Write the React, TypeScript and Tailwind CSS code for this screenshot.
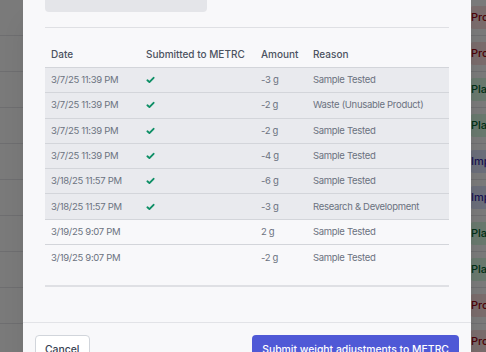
type Adjustment = {
  date: string;
  submitted: boolean;
  amount: string;
  reason: string;
};

const ADJUSTMENTS: Adjustment[] = [
  { date: "3/7/25 11:39 PM", submitted: true, amount: "-3 g", reason: "Sample Tested" },
  { date: "3/7/25 11:39 PM", submitted: true, amount: "-2 g", reason: "Waste (Unusable Product)" },
  { date: "3/7/25 11:39 PM", submitted: true, amount: "-2 g", reason: "Sample Tested" },
  { date: "3/7/25 11:39 PM", submitted: true, amount: "-4 g", reason: "Sample Tested" },
  { date: "3/18/25 11:57 PM", submitted: true, amount: "-6 g", reason: "Sample Tested" },
  { date: "3/18/25 11:57 PM", submitted: true, amount: "-3 g", reason: "Research & Development" },
  { date: "3/19/25 9:07 PM", submitted: false, amount: "2 g", reason: "Sample Tested" },
  { date: "3/19/25 9:07 PM", submitted: false, amount: "-2 g", reason: "Sample Tested" },
];

// status badges of the list behind the dialog, only their first letters show
const BADGES: { label: string; tone: string }[] = [
  { label: "Pro", tone: "bg-red-100 text-red-800" },
  { label: "Pro", tone: "bg-red-100 text-red-800" },
  { label: "Plac", tone: "bg-green-100 text-green-800" },
  { label: "Plac", tone: "bg-green-100 text-green-800" },
  { label: "Imp", tone: "bg-indigo-100 text-indigo-800" },
  { label: "Imp", tone: "bg-indigo-100 text-indigo-800" },
  { label: "Plac", tone: "bg-green-100 text-green-800" },
  { label: "Plac", tone: "bg-green-100 text-green-800" },
  { label: "Pro", tone: "bg-red-100 text-red-800" },
  { label: "Pro", tone: "bg-red-100 text-red-800" },
];

function Check() {
  return (
    <svg width="9" height="8" viewBox="0 0 9 8" fill="none">
      <path
        d="M1.4 4.3 L3.4 6.1 L7.6 1.8"
        stroke="#0f8f66"
        strokeWidth="1.9"
        strokeLinecap="round"
        strokeLinejoin="round"
      />
    </svg>
  );
}

export default function App() {
  return (
    <div className="relative h-[352px] w-[486px] overflow-hidden bg-white font-['Inter',sans-serif]">
      {/* page behind the dialog */}
      <div className="flex flex-col">
        {BADGES.map((b, i) => (
          <div key={i} className="flex h-9 items-center border-b border-gray-200 pl-[470px]">
            <span className={`whitespace-nowrap rounded-l px-[1px] py-[3px] text-[11px] font-medium ${b.tone}`}>
              {b.label}
            </span>
          </div>
        ))}
      </div>
      <div className="absolute inset-0 bg-black/[0.52]" />

      {/* dialog */}
      <div className="absolute left-[23px] top-0 flex h-[390px] w-[448px] flex-col bg-[#f8f8fa] shadow-xl">
        <div className="px-[22px]">
          <div className="h-3 w-[162px] rounded-b-sm bg-[#e4e5e9]" />
          <div className="mt-[15px] border-t border-[#dfe0e4] pt-[13px]">
            <div className="grid h-[27px] grid-cols-[95px_115px_52px_1fr] items-center border-b border-[#d3d5da] text-[10px] font-medium text-[#4b5260]">
              <div className="px-[6px]">Date</div>
              <div className="px-[6px]">Submitted to METRC</div>
              <div className="px-[6px]">Amount</div>
              <div className="px-[6px]">Reason</div>
            </div>
            {ADJUSTMENTS.map((a, i) => (
              <div
                key={i}
                className={`grid h-[25.3px] grid-cols-[95px_115px_52px_1fr] items-center text-[9.5px] tracking-[-0.3px] text-[#6b7280] ${
                  a.submitted ? "bg-[#e9eaee]" : ""
                } ${i < ADJUSTMENTS.length - 1 ? "border-b border-[#d3d5da]" : ""}`}
              >
                <div className="px-[6px]">{a.date}</div>
                <div className="px-[6px]">{a.submitted && <Check />}</div>
                <div className="px-[6px]">{a.amount}</div>
                <div className="px-[6px]">{a.reason}</div>
              </div>
            ))}
            <div className="h-[17px] border-b-2 border-[#dfe0e4]" />
          </div>
        </div>
        <div className="mt-[35px] flex justify-between border-t border-[#e2e3e7] px-3 pt-[12px]">
          <button className="h-[28px] rounded border border-[#d1d5db] bg-white px-[9px] text-[10.4px] font-medium text-[#374151]">
            Cancel
          </button>
          <button className="h-[28px] rounded bg-[#4f59d6] px-[10px] text-[10.4px] font-medium text-white">
            Submit weight adjustments to METRC
          </button>
        </div>
      </div>
    </div>
  );
}
